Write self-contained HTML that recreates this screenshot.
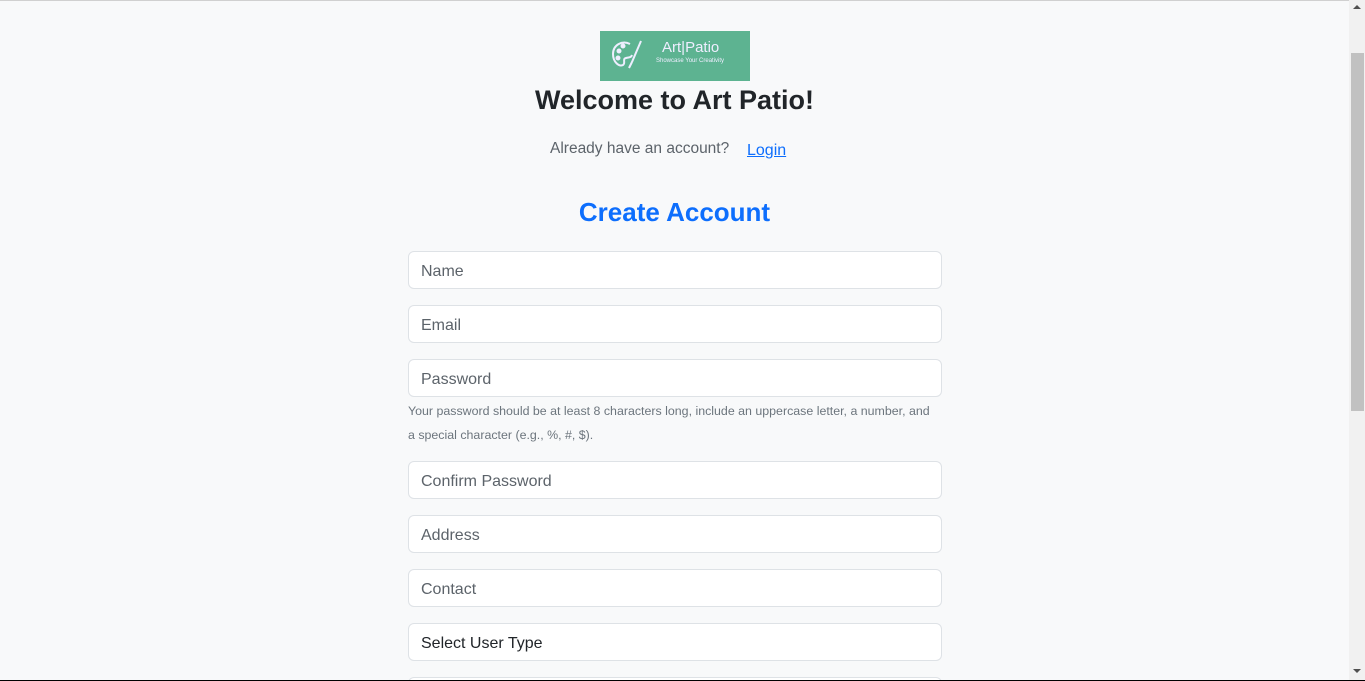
<!DOCTYPE html>
<html><head><meta charset="utf-8"><style>
*{box-sizing:border-box;margin:0;padding:0}
html,body{width:1365px;height:681px;overflow:hidden;background:#f8f9fa;font-family:"Liberation Sans",sans-serif;color:#212529;position:relative}
.a{position:absolute}
.inp{position:absolute;left:408px;width:534px;height:38px;background:#fff;border:1px solid #dee2e6;border-radius:6px;padding-left:12px;padding-top:2px;line-height:36px;font-size:16px;color:#5c636a}
</style></head><body>
<div class="a" style="left:0;top:0;width:1349px;height:1px;background:#d0d0d0"></div>
<div class="a" style="left:600px;top:31px;width:150px;height:50px;background:#5db391">
<svg class="a" style="left:10px;top:7px" width="36" height="34" viewBox="0 0 36 34" fill="none" stroke="#eef" stroke-width="2">
<path d="M20 6C12 2 3 7 3 16c0 8 6 13 10 11 3-2-1-6 3-7 3-1 5 0 6-3"/>
<circle cx="9" cy="13" r="1.5" fill="#eef"/><circle cx="13" cy="8" r="1.5" fill="#eef"/><circle cx="8" cy="20" r="1.5" fill="#eef"/>
<path d="M31 3L22 24M22 24l-3 6"/></svg>
<div class="a" style="left:62px;top:8px;font-size:15px;color:#eef">Art|Patio</div>
<div class="a" style="left:56px;top:27px;font-size:6px;color:#eef">Showcase Your Creativity</div>
</div>
<div class="a" style="left:0;width:1349px;top:85px;text-align:center;font-size:27px;font-weight:bold;color:#212529">Welcome to Art Patio!</div>
<div class="a" style="left:550px;top:140px;font-size:15.5px;color:#5c636a">Already have an account?</div>
<div class="a" style="left:747px;top:142px;font-size:16px;color:#0d6efd;text-decoration:underline">Login</div>
<div class="a" style="left:0;width:1349px;top:197px;text-align:center;font-size:26px;font-weight:bold;color:#0d6efd">Create Account</div>
<div class="inp" style="top:251px">Name</div>
<div class="inp" style="top:305px">Email</div>
<div class="inp" style="top:359px">Password</div>
<div class="a" style="left:408px;top:399px;width:528px;font-size:12.4px;line-height:24px;color:#6c757d">Your password should be at least 8 characters long, include an uppercase letter, a number, and a special character (e.g., %, #, $).</div>
<div class="inp" style="top:461px">Confirm Password</div>
<div class="inp" style="top:515px">Address</div>
<div class="inp" style="top:569px">Contact</div>
<div class="inp" style="top:623px;color:#212529">Select User Type</div>
<div class="inp" style="top:677px"></div>
<div class="a" style="left:1349px;top:0;width:16px;height:681px;background:#f1f1f1"></div>
<div class="a" style="left:1351px;top:53px;width:13px;height:358px;background:#c1c1c1"></div>
<div class="a" style="left:1353px;top:5px;width:0;height:0;border:4px solid transparent;border-bottom-color:#505050;border-top:0"></div>
<div class="a" style="left:1353px;top:669px;width:0;height:0;border:4px solid transparent;border-top-color:#505050;border-bottom:0"></div>
<div class="a" style="left:0;top:680px;width:1365px;height:1px;background:#000"></div>
</body></html>
